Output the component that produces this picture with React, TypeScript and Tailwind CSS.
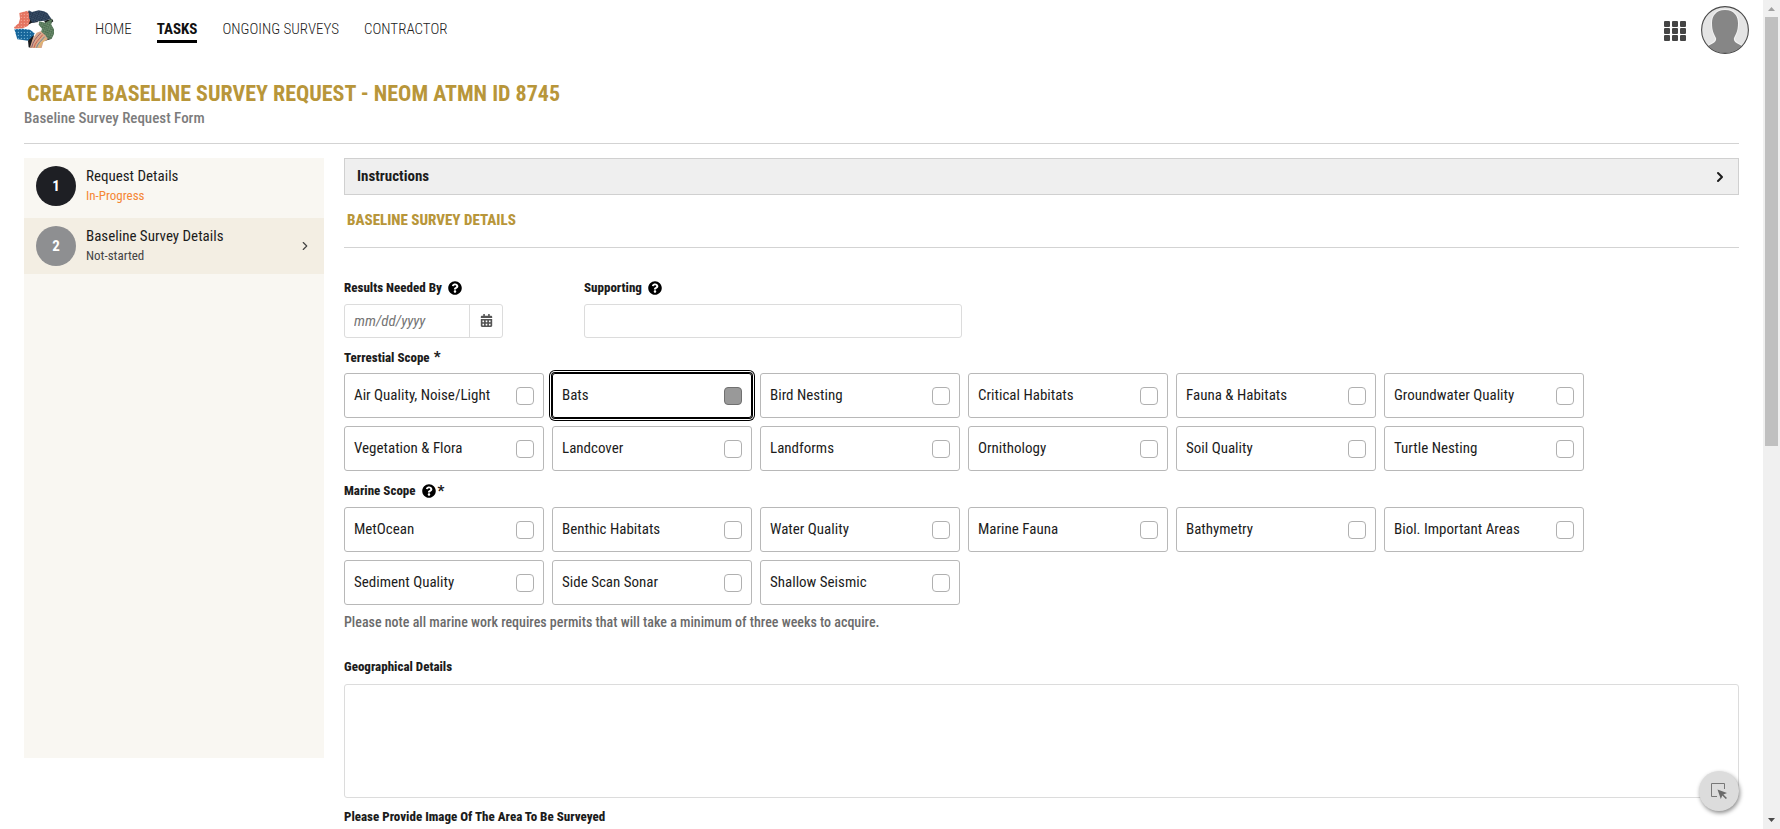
import React, { useId, useState } from 'react';
import { FaCalendarAlt, FaQuestionCircle } from 'react-icons/fa';
import { ChevronRight } from 'lucide-react';

const terrestrial = [
  'Air Quality, Noise/Light', 'Bats', 'Bird Nesting', 'Critical Habitats', 'Fauna & Habitats', 'Groundwater Quality',
  'Vegetation & Flora', 'Landcover', 'Landforms', 'Ornithology', 'Soil Quality', 'Turtle Nesting',
];

const marine = [
  'MetOcean', 'Benthic Habitats', 'Water Quality', 'Marine Fauna', 'Bathymetry', 'Biol. Important Areas',
  'Sediment Quality', 'Side Scan Sonar', 'Shallow Seismic',
];

function Logo() {
  return (
    <svg viewBox="18 18 120 114" className="h-[38px] w-10" aria-hidden="true">
      <defs>
        <pattern id="salmonDots" width="9" height="9" patternUnits="userSpaceOnUse">
          <rect width="9" height="9" fill="#e57562" />
          <circle cx="4" cy="4" r="1.8" fill="#f6b3a4" />
        </pattern>
        <pattern id="blueDots" width="9" height="9" patternUnits="userSpaceOnUse">
          <rect width="9" height="9" fill="#17669b" />
          <circle cx="4" cy="4" r="1.8" fill="#8cc6e4" />
        </pattern>
        <pattern id="navyWeave" width="8" height="8" patternUnits="userSpaceOnUse" patternTransform="rotate(20)">
          <rect width="8" height="8" fill="#22334a" />
          <path d="M0 2h5M3 6h5" stroke="#4d6780" strokeWidth="2" />
        </pattern>
        <pattern id="greenWeave" width="8" height="8" patternUnits="userSpaceOnUse" patternTransform="rotate(30)">
          <rect width="8" height="8" fill="#48694d" />
          <path d="M2 0v5M6 3v5" stroke="#8aa886" strokeWidth="2" />
        </pattern>
      </defs>
      <path d="M62 20 50 52 46 70 72 56 92 54 70 40Z" fill="#15181d" />
      <path d="M108 50 132 44 136 52 118 66Z" fill="#151d1a" />
      <path d="M104 92 132 104 112 110Z" fill="#18221c" />
      <path d="M34 27 58 20 65 30 66 50 60 66 44 73 20 74 18 70 32 58 36 44Z" fill="url(#salmonDots)" />
      <path d="M62 19 72 24 92 19 108 22 118 27 130 44 110 50 90 52 74 57 64 44Z" fill="url(#navyWeave)" />
      <path d="M132 44 130 62 138 76 138 90 131 104 112 105 106 92 99 84 102 74 92 62 94 52 112 56Z" fill="url(#greenWeave)" />
      <path d="M19 76 44 74 66 77 80 88 72 106 60 110 28 106Z" fill="url(#blueDots)" />
      <path d="M60 110 78 92 70 132 62 130Z" fill="#17191c" />
      <path d="M66 130 74 104 86 86 98 82 112 94 120 106 106 114 101 132 68 132Z" fill="#d9a78a" />
      <g fill="none" strokeWidth="2.5">
        <path d="M71 130C75 112 84 102 98 87" stroke="#7a4f6b" />
        <path d="M78 131C81 116 92 108 104 92" stroke="#c8503c" />
        <path d="M86 131C88 120 96 114 110 98" stroke="#4c8a8f" />
        <path d="M94 131C96 122 102 114 114 104" stroke="#e3c455" />
      </g>
    </svg>
  );
}

function Avatar() {
  return (
    <svg viewBox="0 0 48 48" className="size-12" aria-hidden="true">
      <defs>
        <clipPath id="avatarClip"><circle cx="24" cy="24" r="23" /></clipPath>
      </defs>
      <circle cx="24" cy="24" r="23.3" fill="#e4e4e4" />
      <g clipPath="url(#avatarClip)">
        <path d="M24 4C15 4 11 10 11 17c0 8 2 11 4 15 1 4-4 6-8 8v10h34V40c-4-2-9-4-8-8 2-4 4-7 4-15 0-7-4-13-13-13Z" fill="#868686" stroke="#f2f2f2" strokeWidth="2" paintOrder="stroke" />
      </g>
      <circle cx="24" cy="24" r="23.4" fill="none" stroke="#4a4a4a" strokeWidth="1.1" />
    </svg>
  );
}

function Help({ about }: { about: string }) {
  return (
    <button type="button" aria-label={`Help: ${about}`} className="text-black">
      <FaQuestionCircle className="size-3.5" />
    </button>
  );
}

function Step({ number, title, status, active }: { number: number; title: string; status: string; active?: boolean }) {
  return (
    <a href="#" className={`flex gap-2.5 px-3 pt-2 ${active ? 'h-14 bg-[#f3eee3]' : 'h-15'}`}>
      <span className={`flex size-10 items-center justify-center rounded-full text-[15px] font-bold text-white ${active ? 'bg-[#8e8f91]' : 'bg-[#1e1f24]'}`}>
        {number}
      </span>
      <span className="flex-1">
        <span className="block text-[15px] leading-5 font-[450]">{title}</span>
        <span className={`block text-[13px] leading-5 font-[450] ${active ? 'text-[#444]' : 'text-[#f58634]'}`}>{status}</span>
      </span>
      {active && <ChevronRight className="mb-2 size-3.5 self-center text-[#444]" strokeWidth={2} />}
    </a>
  );
}

function ScopeGrid({ items, focused }: { items: string[]; focused?: string }) {
  const id = useId();
  const [picked, setPicked] = useState<string[]>(focused ? [focused] : []);
  const toggle = (item: string) =>
    setPicked(picked.includes(item) ? picked.filter((p) => p !== item) : [...picked, item]);
  return (
    <div className="flex max-w-[1240px] flex-wrap gap-2">
      {items.map((item) => (
        <label
          key={item}
          htmlFor={`${id}-${item}`}
          className={`flex h-[45px] w-50 items-center justify-between rounded-[3px] border px-[9px] text-[15px] font-[450] ${
            item === focused
              ? 'border-black shadow-[0_0_0_1px_#000,0_0_0_2px_#fff,0_0_0_3px_#000]'
              : 'border-[#b8b8b8]'
          }`}
        >
          {item}
          <input
            id={`${id}-${item}`}
            type="checkbox"
            checked={picked.includes(item)}
            onChange={() => toggle(item)}
            className="size-[18px] appearance-none rounded-[4px] border border-[#b0b0b0] checked:border-[#707070] checked:bg-[#999]"
          />
        </label>
      ))}
    </div>
  );
}

export default function App() {
  return (
    <div className="flex h-screen overflow-hidden bg-white font-['Roboto_Condensed','Roboto',sans-serif] text-[#1c1c1c]">
      <div className="min-w-0 flex-1 overflow-y-auto [scrollbar-width:none]">
        <header className="flex h-[60px] items-start px-3.5">
          <div className="pt-2.5"><Logo /></div>
          <nav className="ml-[41px] flex items-start gap-[25px] pt-[18px] text-[15px] leading-[22px] font-light text-[#222]">
            <a href="#">HOME</a>
            <a href="#" className="border-b-3 border-black font-bold text-[#111]">TASKS</a>
            <a href="#">ONGOING SURVEYS</a>
            <a href="#">CONTRACTOR</a>
          </nav>
          <div className="ml-auto flex items-center gap-[15px] pt-1.5">
            <button type="button" aria-label="Applications" className="grid grid-cols-3 gap-x-0.5 gap-y-px pt-0.5">
              {Array.from({ length: 9 }, (_, i) => (
                <span key={i} className="size-1.5 rounded-[1px] bg-[#444]" />
              ))}
            </button>
            <button type="button" aria-label="Account"><Avatar /></button>
          </div>
        </header>

        <div className="px-6">
          <div className="border-b border-[#d3d3d3] pt-5 pb-[15px]">
            <h1 className="pl-[3px] text-[22px] leading-7 font-bold text-[#b8963a]">
              CREATE BASELINE SURVEY REQUEST - NEOM ATMN ID 8745
            </h1>
            <p className="text-[15px] leading-5 font-medium text-[#7c7c7c]">Baseline Survey Request Form</p>
          </div>

          <div className="mt-3.5 flex items-start gap-5">
            <aside className="h-[600px] w-75 shrink-0 bg-[#f9f7f2]">
              <Step number={1} title="Request Details" status="In-Progress" />
              <Step number={2} title="Baseline Survey Details" status="Not-started" active />
            </aside>

            <main className="min-w-0 flex-1">
              <button type="button" className="flex h-[37px] w-full items-center justify-between border border-[#d0d0d0] bg-[#efefef] pr-2.5 pl-3 text-[15px] font-bold">
                Instructions
                <ChevronRight className="size-4" strokeWidth={3} />
              </button>
              <h2 className="border-b border-[#d3d3d3] pt-[15px] pb-[17px] pl-[3px] text-[15px] leading-5 font-extrabold text-[#b8963a]">
                BASELINE SURVEY DETAILS
              </h2>

              <div className="mt-[30px] flex gap-[81px]">
                <div className="w-[159px]">
                  <div className="flex h-5 items-center gap-1.5">
                    <label htmlFor="needed" className="text-[13px] font-extrabold">Results Needed By</label>
                    <Help about="Results Needed By" />
                  </div>
                  <div className="mt-1.5 flex h-[34px] rounded-[3px] border border-[#dcdcdc]">
                    <input id="needed" placeholder="mm/dd/yyyy" className="min-w-0 flex-1 pl-[9px] text-[15px] outline-none placeholder:text-[#757575] placeholder:italic" />
                    <button type="button" aria-label="Open calendar" className="flex w-[33px] items-center justify-center border-l border-[#dcdcdc] pb-0.5 text-[#555]">
                      <FaCalendarAlt className="size-[13px]" />
                    </button>
                  </div>
                </div>
                <div className="w-[378px]">
                  <div className="flex h-5 items-center gap-1.5">
                    <label htmlFor="supporting" className="text-[13px] font-extrabold">Supporting</label>
                    <Help about="Supporting" />
                  </div>
                  <input id="supporting" className="mt-1.5 h-[34px] w-full rounded-[3px] border border-[#dcdcdc] px-2 outline-none" />
                </div>
              </div>

              <fieldset>
                <legend className="flex h-[35px] items-center gap-1 pt-1 text-[13px] font-extrabold">
                  Terrestial Scope <span className="text-[15px]">*</span>
                </legend>
                <ScopeGrid items={terrestrial} focused="Bats" />
              </fieldset>

              <fieldset>
                <legend className="flex h-9 items-center pt-1 text-[13px] font-extrabold">
                  <span className="mr-1.5">Marine Scope</span>
                  <Help about="Marine Scope" />
                  <span className="ml-0.5 text-[15px]">*</span>
                </legend>
                <ScopeGrid items={marine} />
              </fieldset>
              <p className="mt-[7px] text-sm leading-5 font-medium text-[#6b6b6b]">
                Please note all marine work requires permits that will take a minimum of three weeks to acquire.
              </p>

              <label htmlFor="geo" className="mt-[25px] block text-[13px] leading-5 font-extrabold">Geographical Details</label>
              <textarea id="geo" className="mt-[7px] block h-[114px] w-full resize-none rounded-[3px] border border-[#dcdcdc] p-2 outline-none" />
              <p className="mt-[9px] text-[13px] leading-5 font-extrabold">Please Provide Image Of The Area To Be Surveyed</p>
            </main>
          </div>
        </div>
      </div>

      <div aria-hidden="true" className="flex w-[17px] shrink-0 flex-col items-center bg-[#f0f0f0]">
        <svg viewBox="0 0 17 17" className="size-[17px]"><path d="M5 11h7L8.500 7Z" fill="#a0a0a0" /></svg>
        <div className="min-h-0 w-[13px] flex-1"><div className="h-[54%] bg-[#c0c0c0]" /></div>
        <svg viewBox="0 0 17 17" className="size-[17px]"><path d="M5 6h7l-3.500 4Z" fill="#4a4a4a" /></svg>
      </div>

      <button type="button" aria-label="Select element" className="fixed right-[41px] bottom-[18px] flex size-10 items-center justify-center rounded-full bg-[#dcdcdc] shadow-[1px_2px_4px_rgba(0,0,0,0.45)]">
        <svg viewBox="0 0 16 16" className="size-4">
          <path d="M13.500 6V.5H.5v13H6" fill="none" stroke="#777" />
          <path d="M6.500 6.500 16 10l-3.600 1.400L16 15l-1.200 1-3.500-3.400L9.800 16Z" fill="#6a6a6a" />
        </svg>
      </button>
    </div>
  );
}
